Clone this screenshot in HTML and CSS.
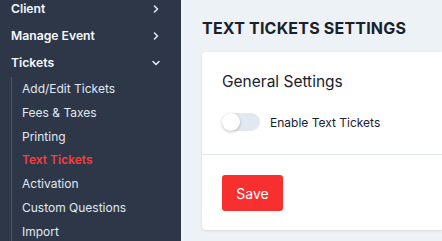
FILE: index.html
```html
<!DOCTYPE html>
<html lang="en">
<head>
    <meta charset="UTF-8">
    <meta name="viewport" content="width=device-width, initial-scale=1.0">
    <title>Text Tickets Settings</title>
    <link rel="stylesheet" href="styles.css">
</head>
<body>
    <div class="layout">
        <nav class="sidebar">
            <div class="nav-menu">
                <div class="nav-item">
                    <span>Client</span>
                    <svg class="chevron" viewBox="0 0 10 10"><path d="M3.5 2 L6.5 5 L3.5 8"/></svg>
                </div>
                <div class="nav-item">
                    <span>Manage Event</span>
                    <svg class="chevron" viewBox="0 0 10 10"><path d="M3.5 2 L6.5 5 L3.5 8"/></svg>
                </div>
                <div class="nav-item">
                    <span>Tickets</span>
                    <svg class="chevron" viewBox="0 0 10 10"><path d="M2 3.5 L5 6.5 L8 3.5"/></svg>
                </div>
                <ul class="sub-nav">
                    <li>Add/Edit Tickets</li>
                    <li>Fees &amp; Taxes</li>
                    <li>Printing</li>
                    <li class="active">Text Tickets</li>
                    <li>Activation</li>
                    <li>Custom Questions</li>
                    <li>Import</li>
                </ul>
            </div>
        </nav>

        <main class="content">
            <h1>Text Tickets Settings</h1>
            <div class="card">
                <div class="card-body">
                    <h2>General Settings</h2>
                    <label class="toggle-row">
                        <span class="toggle"><span class="knob"></span></span>
                        <span>Enable Text Tickets</span>
                    </label>
                </div>
                <div class="card-footer">
                    <button class="save-btn">Save</button>
                </div>
            </div>
        </main>
    </div>
</body>
</html>
```

FILE: styles.css
```css
* {
    margin: 0;
    padding: 0;
    box-sizing: border-box;
}

body {
    font-family: 'Inter', 'Noto Sans', sans-serif;
    background: #edf2f7;
    overflow: hidden;
}

.layout {
    display: flex;
    height: 241px;
}

.sidebar {
    width: 181px;
    flex-shrink: 0;
    background: #2d3748;
    color: #f7fafc;
    overflow: hidden;
}

.nav-menu {
    margin-top: -5px;
}

.nav-item {
    display: flex;
    justify-content: space-between;
    align-items: center;
    height: 27px;
    padding: 0 20px 0 11px;
    font-size: 12.2px;
    font-weight: 600;
}

.chevron {
    width: 10px;
    height: 10px;
    fill: none;
    stroke: #e2e8f0;
    stroke-width: 1.6;
    stroke-linecap: round;
    stroke-linejoin: round;
}

.sub-nav {
    list-style: none;
    margin: 1px 0 0 11px;
    border-left: 1px solid #4a5568;
}

.sub-nav li {
    height: 23.8px;
    line-height: 23.8px;
    padding-left: 10px;
    font-size: 12px;
    color: #e2e8f0;
}

.sub-nav li.active {
    color: #f43f3f;
    font-weight: 600;
}

.content {
    flex: 1;
    padding: 19px 0 0 21px;
}

h1 {
    font-size: 16px;
    line-height: 18px;
    font-weight: 700;
    letter-spacing: 0.2px;
    text-transform: uppercase;
    color: #1a202c;
    margin-bottom: 15px;
}

.card {
    background: #fff;
    border-radius: 4px 0 0 4px;
    box-shadow: 0 1px 3px rgba(0, 0, 0, 0.1);
}

.card-body {
    padding: 20px 20px 23px;
    border-bottom: 1px solid #e2e8f0;
}

h2 {
    font-size: 15.5px;
    line-height: 20px;
    font-weight: 400;
    color: #1a202c;
    margin-bottom: 21px;
}

.toggle-row {
    display: flex;
    align-items: center;
    gap: 10px;
    height: 18px;
    font-size: 12px;
    color: #1a202c;
}

.toggle {
    position: relative;
    width: 38px;
    height: 18px;
    border-radius: 9px;
    background: #e2e8f0;
}

.knob {
    position: absolute;
    left: 0;
    top: 0;
    width: 18px;
    height: 18px;
    border-radius: 50%;
    background: #fff;
    box-shadow: 0 1px 3px rgba(0, 0, 0, 0.25);
}

.card-footer {
    padding: 20px 20px 19px;
}

.save-btn {
    display: block;
    font-family: inherit;
    background: #f82f2f;
    color: #fff;
    border: none;
    border-radius: 3px;
    width: 61px;
    height: 36px;
    font-size: 14px;
}
```
